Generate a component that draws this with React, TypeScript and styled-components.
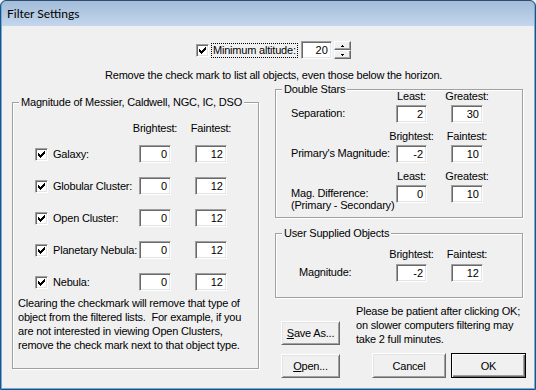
import React from "react";
import styled, { createGlobalStyle } from "styled-components";

const GlobalStyle = createGlobalStyle`
  html, body { margin: 0; padding: 0; }
  body {
    background: #f0f0f0;
    font-family: "Liberation Sans", Arial, sans-serif;
    font-size: 11px;
    letter-spacing: -0.2px;
    color: #000;
  }
  *, *::before, *::after { box-sizing: border-box; }
`;

const Window = styled.div`
  width: 536px;
  height: 390px;
  display: flex;
  flex-direction: column;
  border: 1px solid #2e4d73;
  border-radius: 6px 6px 0 0;
  padding: 0 1px 1px;
  background: #5fb0e8;
  overflow: hidden;
`;

const TitleBar = styled.div`
  height: 25px;
  flex-shrink: 0;
  display: flex;
  align-items: center;
  padding-left: 5px;
  background: linear-gradient(#a3bcd9, #c3d6ec);
  border-radius: 5px 5px 0 0;
  font-family: Lato, "Noto Sans", sans-serif;
  font-size: 12px;
  letter-spacing: 0;
  color: #000;
`;

const Client = styled.div`
  flex: 1;
  display: flex;
  flex-direction: column;
  padding-top: 15px;
  background: #f0f0f0;
`;

const AltitudeRow = styled.div`
  display: flex;
  align-items: center;
  height: 18px;
  margin-left: 194px;
`;

const Hint = styled.div`
  margin: 10px 0 0 103px;
  line-height: 13px;
  white-space: nowrap;
`;

const Main = styled.div`
  display: flex;
  align-items: flex-start;
  gap: 16px;
  margin-top: 7px;
  padding-left: 10px;
`;

const RightCol = styled.div`
  display: flex;
  flex-direction: column;
  width: 248px;
`;

const GroupBox = styled.div<{ $w: number; $h: number; $pt: number; $pl: number; $mt?: number }>`
  position: relative;
  flex-shrink: 0;
  width: ${(p) => p.$w}px;
  height: ${(p) => p.$h}px;
  margin-top: ${(p) => p.$mt ?? 0}px;
  padding: ${(p) => p.$pt}px 0 0 ${(p) => p.$pl}px;
  border: 1px solid #a0a0a0;
  box-shadow: inset 1px 1px 0 #fff, 1px 1px 0 #fff;
`;

const Caption = styled.span`
  position: absolute;
  top: -7px;
  left: 6px;
  padding: 0 2px;
  line-height: 13px;
  background: #f0f0f0;
  white-space: nowrap;
`;

const CheckBox = styled.span`
  display: inline-flex;
  align-items: center;
  justify-content: center;
  flex-shrink: 0;
  width: 13px;
  height: 13px;
  background: #fff;
  border: 1px solid;
  border-color: #a0a0a0 #fff #fff #a0a0a0;
  box-shadow: inset 1px 1px 0 #696969, inset -1px -1px 0 #e3e3e3;
`;

const FocusLabel = styled.span`
  margin-left: 3px;
  padding: 0 1px;
  line-height: 13px;
  outline: 1px dotted #000;
  outline-offset: 0;
  white-space: nowrap;
`;

const Edit = styled.input<{ $w: number; $h?: number }>`
  width: ${(p) => p.$w}px;
  height: ${(p) => p.$h ?? 18}px;
  margin: 0;
  padding: 0 3px 0 0;
  font: inherit;
  letter-spacing: 0;
  color: #000;
  text-align: right;
  background: #fff;
  border: 1px solid;
  border-color: #a0a0a0 #fff #fff #a0a0a0;
  box-shadow: inset 1px 1px 0 #696969, inset -1px -1px 0 #e3e3e3;
  outline: none;
`;

const Spinner = styled.div`
  display: flex;
  flex-direction: column;
  width: 17px;
  height: 18px;
  margin-left: 2px;
`;

const SpinButton = styled.span`
  flex: 1;
  display: flex;
  align-items: center;
  justify-content: center;
  background: #f0f0f0;
  border: 1px solid;
  border-color: #fff #696969 #696969 #fff;
  box-shadow: inset -1px -1px 0 #a0a0a0;
`;

const MagHead = styled.div`
  display: grid;
  grid-template-columns: 18px 86px 56px 32px;
  height: 13px;
  line-height: 13px;
  margin-left: 17px;
`;

const ColHead = styled.span<{ $col: number; $w: number }>`
  grid-column: ${(p) => p.$col};
  width: ${(p) => p.$w}px;
  display: flex;
  justify-content: center;
  line-height: 13px;
  white-space: nowrap;
`;

const MagRows = styled.div`
  display: grid;
  grid-template-columns: 18px 86px 56px 32px;
  grid-auto-rows: 18px;
  row-gap: 14px;
  align-items: center;
  margin: 10px 0 0 17px;
`;

const RowLabel = styled.span`
  white-space: nowrap;
`;

const GroupNote = styled.p`
  margin: 5px 0 0;
  line-height: 14px;
  white-space: nowrap;
`;

const Sections = styled.div`
  display: flex;
  flex-direction: column;
  gap: 7px;
`;

const Section = styled.div<{ $labelW: number; $rowGap?: number }>`
  display: grid;
  grid-template-columns: ${(p) => p.$labelW}px 31px 32px;
  grid-template-rows: 13px 18px;
  column-gap: 24px;
  row-gap: ${(p) => p.$rowGap ?? 2}px;
`;

const FieldLabel = styled.span`
  align-self: start;
  margin-top: 2px;
  line-height: 12px;
  white-space: nowrap;
`;

const BottomRow = styled.div<{ $mt: number }>`
  display: flex;
  align-items: flex-end;
  margin-top: ${(p) => p.$mt}px;
  padding-left: 6px;
`;

const PleaseNote = styled.p`
  margin: 0 0 0 16px;
  line-height: 14px;
  white-space: nowrap;
`;

const PushButton = styled.button<{ $w: number; $h: number; $ml?: number; $mb?: number; $isDefault?: boolean }>`
  flex-shrink: 0;
  width: ${(p) => p.$w}px;
  height: ${(p) => p.$h}px;
  margin: 0 0 ${(p) => p.$mb ?? 0}px ${(p) => p.$ml ?? 0}px;
  padding: 0;
  font: inherit;
  letter-spacing: inherit;
  color: #000;
  background: #f0f0f0;
  border: 1px solid;
  border-color: ${(p) => (p.$isDefault ? "#000" : "#fff #696969 #696969 #fff")};
  box-shadow: ${(p) =>
    p.$isDefault
      ? "inset 1px 1px 0 #fff, inset -1px -1px 0 #696969, inset -2px -2px 0 #a0a0a0"
      : "inset 1px 1px 0 #e3e3e3, inset -1px -1px 0 #a0a0a0"};
  & u { text-decoration: underline; }
`;

const CheckMark = () => (
  <svg width="7" height="7" viewBox="0 0 7 7" shapeRendering="crispEdges" aria-hidden="true">
    <path
      d="M6 0h1v1h-1z M5 1h2v1h-2z M0 2h1v1h-1z M4 2h3v1h-3z M0 3h2v1h-2z M3 3h3v1h-3z M0 4h5v1h-5z M1 5h3v1h-3z M2 6h1v1h-1z"
      fill="#000"
    />
  </svg>
);

const Arrow = ({ up }: { up: boolean }) => (
  <svg width="3" height="2" viewBox="0 0 3 2" shapeRendering="crispEdges" aria-hidden="true">
    <path d={up ? "M1 0h1v1h-1z M0 1h3v1h-3z" : "M0 0h3v1h-3z M1 1h1v1h-1z"} fill="#000" />
  </svg>
);

const Checked = () => (
  <CheckBox>
    <CheckMark />
  </CheckBox>
);

const magRows = ["Galaxy:", "Globular Cluster:", "Open Cluster:", "Planetary Nebula:", "Nebula:"];

export default function App() {
  return (
    <>
      <GlobalStyle />
      <Window>
        <TitleBar>Filter Settings</TitleBar>
        <Client>
          <AltitudeRow>
            <Checked />
            <FocusLabel>Minimum altitude:</FocusLabel>
            <Edit $w={31} readOnly value="20" style={{ marginLeft: 4 }} />
            <Spinner>
              <SpinButton>
                <Arrow up />
              </SpinButton>
              <SpinButton>
                <Arrow up={false} />
              </SpinButton>
            </Spinner>
          </AltitudeRow>
          <Hint>Remove the check mark to list all objects, even those below the horizon.</Hint>
          <Main>
            <GroupBox $w={247} $h={267} $pt={19} $pl={5} $mt={13}>
              <Caption>Magnitude of Messier, Caldwell, NGC, IC, DSO</Caption>
              <MagHead>
                <ColHead $col={3} $w={32}>Brightest:</ColHead>
                <ColHead $col={4} $w={32}>Faintest:</ColHead>
              </MagHead>
              <MagRows>
                {magRows.map((label) => (
                  <React.Fragment key={label}>
                    <Checked />
                    <RowLabel>{label}</RowLabel>
                    <Edit $w={32} readOnly value="0" />
                    <Edit $w={32} readOnly value="12" />
                  </React.Fragment>
                ))}
              </MagRows>
              <GroupNote>
                Clearing the checkmark will remove that type of
                <br />
                object from the filtered lists.{"\u00a0 "}For example, if you
                <br />
                are not interested in viewing Open Clusters,
                <br />
                remove the check mark next to that object type.
              </GroupNote>
            </GroupBox>
            <RightCol>
              <GroupBox $w={248} $h={129} $pt={0} $pl={15}>
                <Caption>Double Stars</Caption>
                <Sections>
                  <Section $labelW={81}>
                    <span />
                    <ColHead $col={2} $w={31}>Least:</ColHead>
                    <ColHead $col={3} $w={32}>Greatest:</ColHead>
                    <FieldLabel>Separation:</FieldLabel>
                    <Edit $w={31} readOnly value="2" />
                    <Edit $w={32} readOnly value="30" />
                  </Section>
                  <Section $labelW={81}>
                    <span />
                    <ColHead $col={2} $w={31}>Brightest:</ColHead>
                    <ColHead $col={3} $w={32}>Faintest:</ColHead>
                    <FieldLabel>Primary's Magnitude:</FieldLabel>
                    <Edit $w={31} readOnly value="-2" />
                    <Edit $w={32} readOnly value="10" />
                  </Section>
                  <Section $labelW={81}>
                    <span />
                    <ColHead $col={2} $w={31}>Least:</ColHead>
                    <ColHead $col={3} $w={32}>Greatest:</ColHead>
                    <FieldLabel>
                      Mag. Difference:
                      <br />
                      (Primary - Secondary)
                    </FieldLabel>
                    <Edit $w={31} readOnly value="0" />
                    <Edit $w={32} readOnly value="10" />
                  </Section>
                </Sections>
              </GroupBox>
              <GroupBox $w={248} $h={65} $pt={14} $pl={23} $mt={15}>
                <Caption>User Supplied Objects</Caption>
                <Section $labelW={73} $rowGap={3}>
                  <span />
                  <ColHead $col={2} $w={31}>Brightest:</ColHead>
                  <ColHead $col={3} $w={32}>Faintest:</ColHead>
                  <FieldLabel>Magnitude:</FieldLabel>
                  <Edit $w={31} readOnly value="-2" />
                  <Edit $w={32} readOnly value="12" />
                </Section>
              </GroupBox>
              <BottomRow $mt={6}>
                <PushButton $w={59} $h={24} $mb={1}>
                  <u>S</u>ave As...
                </PushButton>
                <PleaseNote>
                  Please be patient after clicking OK;
                  <br />
                  on slower computers filtering may
                  <br />
                  take 2 full minutes.
                </PleaseNote>
              </BottomRow>
              <BottomRow $mt={7}>
                <PushButton $w={59} $h={24}>
                  <u>O</u>pen...
                </PushButton>
                <PushButton $w={74} $h={25} $ml={32}>
                  Cancel
                </PushButton>
                <PushButton $w={75} $h={25} $ml={5} $isDefault>
                  OK
                </PushButton>
              </BottomRow>
            </RightCol>
          </Main>
        </Client>
      </Window>
    </>
  );
}
